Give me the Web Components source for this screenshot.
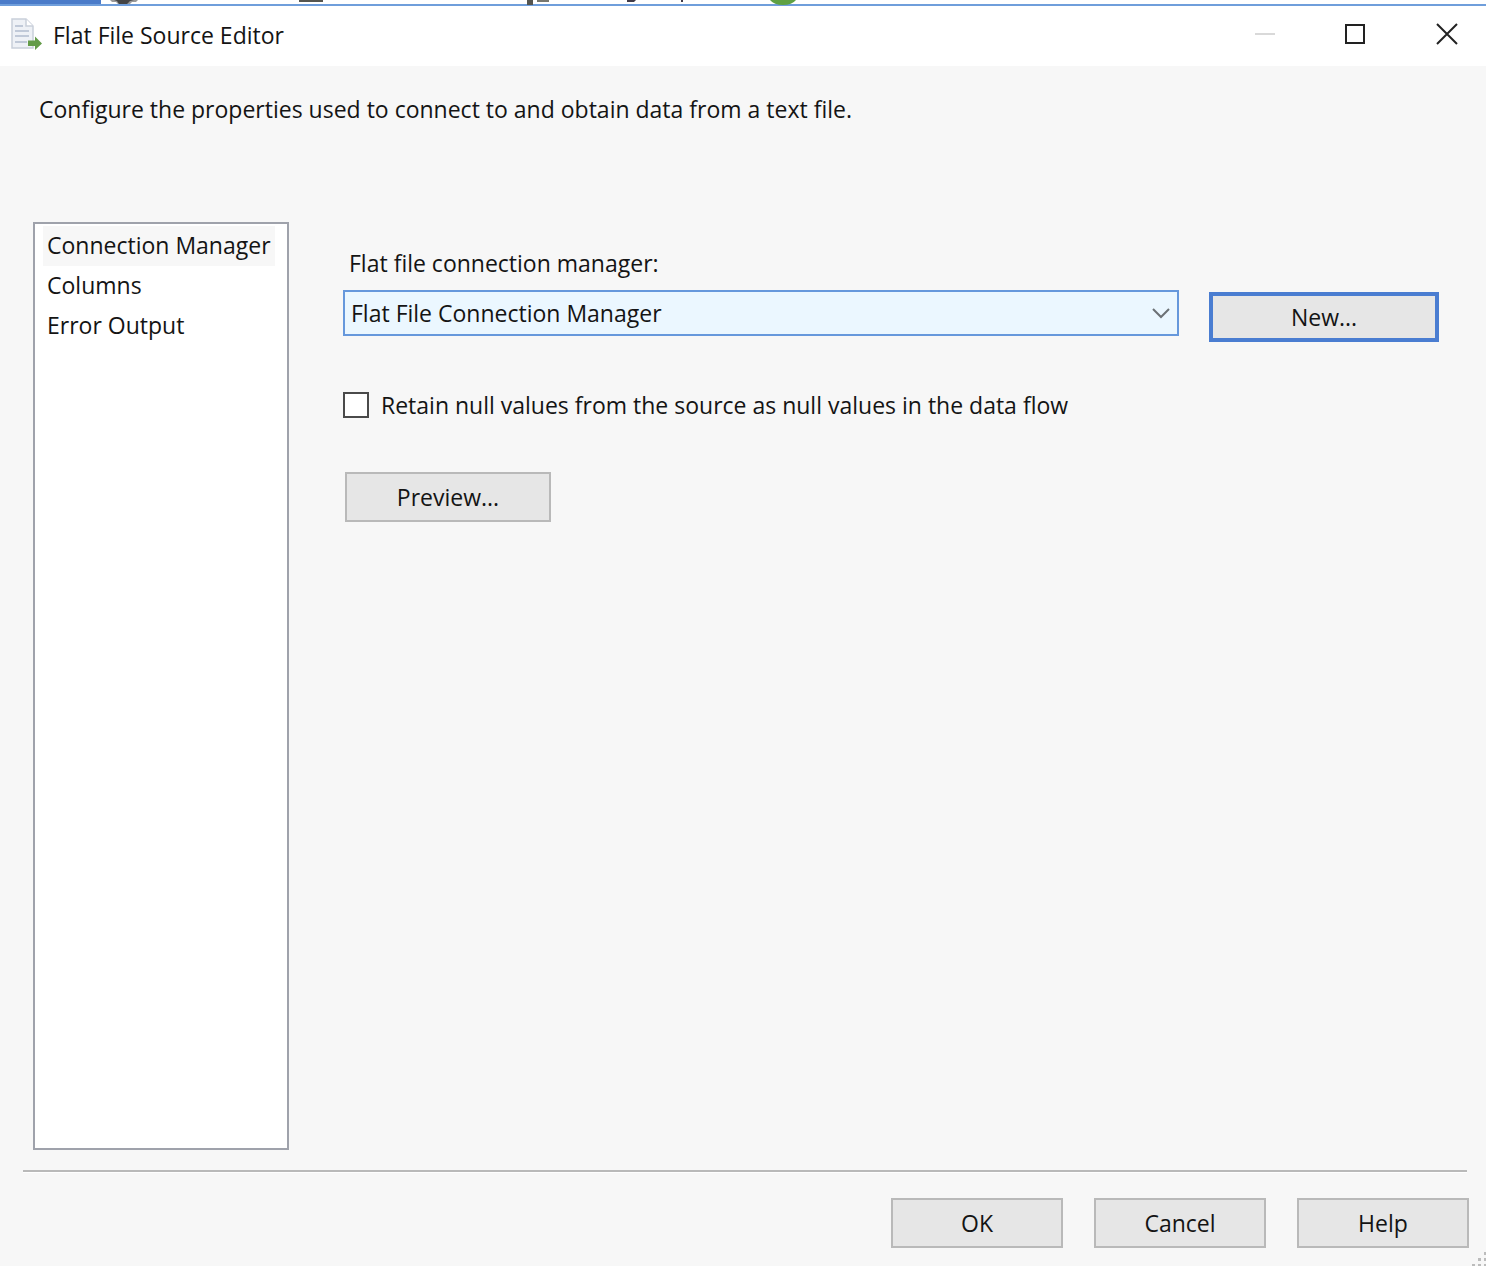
<!DOCTYPE html>
<html lang="en">
<head>
<meta charset="utf-8">
<title>Flat File Source Editor</title>
<style>
  body {
    margin: 0;
    background: #f7f7f7;
    color: #141414;
    font: 23px/32px "Open Sans", "Noto Sans", sans-serif;
  }
</style>
</head>
<body>
<editor-dialog></editor-dialog>

<script>
//Strip of the parent window's toolbar that shows above the dialog
class ToolbarEdge extends HTMLElement {
  constructor() {
    super();
    this._root = this.attachShadow({ mode: "open" });
  }

  connectedCallback() {
    this._root.innerHTML = `
    <style>
      :host {
        display: block;
        height: 4px;
        background: #fff;
        border-bottom: 2px solid #6f9edb;
      }
      svg {
        display: block;
      }
    </style>
    <svg width="830" height="5" aria-hidden="true">
      <path fill="#4a7bc9" d="M0 0h101v4H0z"/>
      <path fill="#999" d="M110 0h28l-2 2h-4l-2 2h-12l-2-2h-4z"/>
      <path fill="#444" d="M114 0h20l-4 1-3 3h-8l-2-3z"/>
      <path fill="#55554f" d="M299 0h24v2h-24zM527 0h6v5h-6z"/>
      <path fill="#77776f" d="M537 0h12v2h-12z"/>
      <path fill="#3f3a48" d="M627 0h9l-2 2h-7zM681 0h2v2h-2z"/>
      <path fill="#5fa143" d="M770 0h26q-4 5-13 5t-13-5z"/>
    </svg>`;
  }
}
customElements.define("toolbar-edge", ToolbarEdge);

//Title bar with icon, caption and window buttons
class TitleBar extends HTMLElement {
  constructor() {
    super();
    this._root = this.attachShadow({ mode: "open" });
  }

  connectedCallback() {
    this._root.innerHTML = `
    <style>
      :host {
        display: flex;
        align-items: center;
        gap: 13px;
        height: 58px;
        padding: 0 0 2px 10px;
        background: #fff;
      }
      svg {
        display: block;
      }
      h1 {
        flex: 1;
        margin: 0 0 0 -2px;
        font-size: inherit;
        font-weight: normal;
      }
      button {
        display: flex;
        align-items: center;
        justify-content: center;
        width: 78px;
        height: 56px;
        padding: 0 0 2px;
        border: 0;
        background: none;
        color: #222;
      }
      button:disabled {
        color: #d9d9d9;
      }
    </style>
    <svg width="32" height="36" viewBox="0 0 32 36" aria-hidden="true">
      <path fill="#eef1f6" stroke="#c9cfda" stroke-width="1.5" d="M2 2h14l7 7v22H2z"/>
      <path fill="#fff" stroke="#c9cfda" stroke-width="1.5" d="M16 2v7h7"/>
      <path stroke="#c0c9d8" stroke-width="2" d="M5 9h8M5 14h14M5 19h14M5 25h12"/>
      <path fill="#639b48" d="M18 23.500h7v-4l7 7-7 6.500v-4h-7z"/>
    </svg>
    <h1><slot></slot></h1>
    <button type="button" aria-label="Minimize" disabled>
      <svg width="22" height="22"><path stroke="currentColor" stroke-width="2" d="M1 11h20"/></svg>
    </button>
    <button type="button" aria-label="Maximize">
      <svg width="22" height="22"><path fill="none" stroke="currentColor" stroke-width="2" d="M1 2h18v18H1z"/></svg>
    </button>
    <button type="button" aria-label="Close">
      <svg width="22" height="22"><path stroke="currentColor" stroke-width="2" d="M1 1l20 20M21 1L1 21"/></svg>
    </button>`;
  }
}
customElements.define("title-bar", TitleBar);

//Push button, "primary" gives the thick blue frame
class PushButton extends HTMLElement {
  constructor() {
    super();
    this._root = this.attachShadow({ mode: "open" });
  }

  connectedCallback() {
    this._root.innerHTML = `
    <style>
      :host {
        display: block;
        width: 172px;
      }
      button {
        display: block;
        box-sizing: border-box;
        width: 100%;
        height: 50px;
        padding: 0;
        border: 2px solid #b9b9b9;
        background: #e6e6e6;
        color: inherit;
        font: inherit;
      }
      :host([primary]) button {
        border: 4px solid #4a7dd1;
      }
    </style>
    <button type="button"><slot></slot></button>`;
  }
}
customElements.define("push-button", PushButton);

//List of the editor's pages
class PageList extends HTMLElement {
  constructor() {
    super();
    this._root = this.attachShadow({ mode: "open" });
  }

  connectedCallback() {
    const pages = this.getAttribute("pages").split("|");
    this._root.innerHTML = `
    <style>
      :host {
        display: block;
        box-sizing: border-box;
        border: 2px solid #9fa2ab;
        background: #fff;
      }
      ul {
        margin: 0;
        padding: 2px 8px;
        list-style: none;
      }
      button {
        display: block;
        height: 40px;
        padding: 0 4px 2px;
        border: 0;
        background: none;
        color: inherit;
        font: inherit;
        white-space: nowrap;
      }
      button[aria-current] {
        background: #f7f7f7;
      }
    </style>
    <ul></ul>`;

    const list = this._root.querySelector("ul");
    pages.forEach((page, i) => {
      const item = document.createElement("li");
      const button = document.createElement("button");
      button.type = "button";
      button.textContent = page;
      if (i === 0) {
        button.setAttribute("aria-current", "page");
      }
      button.addEventListener("click", () => {
        list.querySelector("[aria-current]").removeAttribute("aria-current");
        button.setAttribute("aria-current", "page");
      });
      item.appendChild(button);
      list.appendChild(item);
    });
  }
}
customElements.define("page-list", PageList);

//Settings of the Connection Manager page
class ConnectionPage extends HTMLElement {
  constructor() {
    super();
    this._root = this.attachShadow({ mode: "open" });
  }

  connectedCallback() {
    this._root.innerHTML = `
    <style>
      :host {
        display: block;
        padding-top: 25px;
      }
      .caption {
        display: block;
        padding-left: 6px;
      }
      .row {
        display: flex;
        align-items: flex-end;
        gap: 30px;
        margin-top: 11px;
      }
      .combo {
        display: grid;
        flex: 1;
        align-self: flex-start;
        align-items: center;
      }
      .combo > * {
        grid-area: 1 / 1;
      }
      select {
        appearance: none;
        width: 100%;
        height: 46px;
        padding: 0 40px 0 6px;
        border: 2px solid #6698dc;
        border-radius: 0;
        background: #ebf7ff;
        color: inherit;
        font: inherit;
      }
      .combo svg {
        justify-self: end;
        margin-right: 9px;
        pointer-events: none;
      }
      .row push-button {
        width: 230px;
        padding-top: 2px;
      }
      .check {
        display: flex;
        align-items: center;
        gap: 12px;
        margin-top: 47px;
      }
      input {
        appearance: none;
        box-sizing: border-box;
        width: 26px;
        height: 26px;
        margin: 0;
        border: 2px solid #4a4a4a;
        background: #fff;
      }
      input:checked {
        background: #4a4a4a;
        box-shadow: inset 0 0 0 4px #fff;
      }
      .preview {
        width: 206px;
        margin: 51px 0 0 2px;
      }
    </style>
    <label class="caption" for="manager">Flat file connection manager:</label>
    <div class="row">
      <div class="combo">
        <select id="manager">
          <option>Flat File Connection Manager</option>
        </select>
        <svg width="18" height="12" aria-hidden="true">
          <path fill="none" stroke="#6c7175" stroke-width="2" d="M1 2l8 8 8-8"/>
        </svg>
      </div>
      <push-button primary>New...</push-button>
    </div>
    <div class="check">
      <input type="checkbox" id="retain">
      <label for="retain">Retain null values from the source as null values in the data flow</label>
    </div>
    <push-button class="preview">Preview...</push-button>`;
  }
}
customElements.define("connection-page", ConnectionPage);

//The whole dialog
class EditorDialog extends HTMLElement {
  constructor() {
    super();
    this._root = this.attachShadow({ mode: "open" });
  }

  connectedCallback() {
    this._root.innerHTML = `
    <style>
      :host {
        display: flex;
        flex-direction: column;
        min-height: 100vh;
        position: relative;
      }
      p {
        margin: 0;
        padding: 27px 39px 97px;
      }
      main {
        display: flex;
        flex: 1;
        gap: 54px;
        padding: 0 47px 20px 33px;
      }
      page-list {
        flex: 0 0 256px;
      }
      connection-page {
        flex: 1;
      }
      hr {
        height: 2px;
        margin: 0 19px 0 23px;
        border: 0;
        background: #b9b9b9;
        box-shadow: 0 1px #fff;
      }
      footer {
        display: flex;
        justify-content: flex-end;
        gap: 31px;
        padding: 26px 17px 18px;
      }
      .grip {
        position: absolute;
        right: 0;
        bottom: 0;
      }
    </style>
    <toolbar-edge></toolbar-edge>
    <title-bar>Flat File Source Editor</title-bar>
    <p>Configure the properties used to connect to and obtain data from a text file.</p>
    <main>
      <page-list pages="Connection Manager|Columns|Error Output"></page-list>
      <connection-page></connection-page>
    </main>
    <hr>
    <footer>
      <push-button>OK</push-button>
      <push-button>Cancel</push-button>
      <push-button>Help</push-button>
    </footer>
    <svg class="grip" width="14" height="14" aria-hidden="true">
      <path fill="#bcbcbc" d="M12 0h2v3h-2zM6 6h3v3H6zM12 6h2v3h-2zM0 12h3v2H0zM6 12h3v2H6zM12 12h2v2h-2z"/>
    </svg>`;
  }
}
customElements.define("editor-dialog", EditorDialog);
</script>
</body>
</html>
